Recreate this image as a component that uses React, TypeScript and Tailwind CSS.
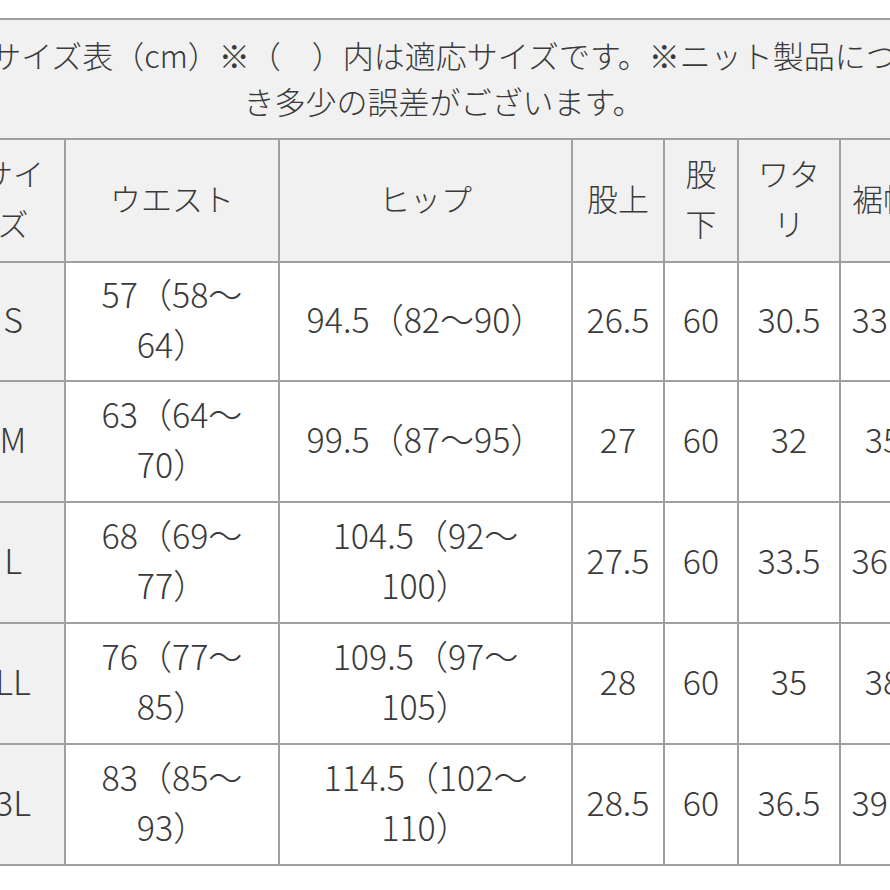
const headers: { label: string[] }[] = [
  { label: ["サイ", "ズ"] },
  { label: ["ウエスト"] },
  { label: ["ヒップ"] },
  { label: ["股上"] },
  { label: ["股", "下"] },
  { label: ["ワタ", "リ"] },
  { label: ["裾幅"] },
];

// each cell is a list of lines
const rows: string[][][] = [
  [["S"], ["57（58～", "64）"], ["94.5（82～90）"], ["26.5"], ["60"], ["30.5"], ["33.5"]],
  [["M"], ["63（64～", "70）"], ["99.5（87～95）"], ["27"], ["60"], ["32"], ["35"]],
  [["L"], ["68（69～", "77）"], ["104.5（92～", "100）"], ["27.5"], ["60"], ["33.5"], ["36.5"]],
  [["LL"], ["76（77～", "85）"], ["109.5（97～", "105）"], ["28"], ["60"], ["35"], ["38"]],
  [["3L"], ["83（85～", "93）"], ["114.5（102～", "110）"], ["28.5"], ["60"], ["36.5"], ["39.5"]],
];

const rowHeights = ["h-[119px]", "h-[121px]", "h-[121px]", "h-[121px]", "h-[121px]"];

const colWidths = ["w-[104px]", "w-[214px]", "w-[293px]", "w-[92px]", "w-[74px]", "w-[102px]", "w-[86px]"];

const Lines = ({ lines }: { lines: string[] }) => (
  <>
    {lines.map((l, i) => (
      <span key={i} className="block whitespace-nowrap">
        {l}
      </span>
    ))}
  </>
);

export default function App() {
  return (
    <div
      className="w-[890px] h-[890px] overflow-hidden bg-white font-light text-[#3a3a3a]"
      style={{ fontFamily: '"Noto Sans CJK JP", "Noto Sans", sans-serif' }}
    >
      <table className="mt-[18px] ml-[-40px] w-[965px] table-fixed border-collapse">
        <colgroup>
          {colWidths.map((w, i) => (
            <col key={i} className={w} />
          ))}
        </colgroup>
        <tbody>
          <tr className="h-[120px]">
            <td
              colSpan={7}
              className="border-2 border-[#a0a0a0] bg-[#f1f1f1] pb-[3px] text-center text-[31px] leading-[46px]"
            >
              <span className="block whitespace-nowrap">
                サイズ表（cm）※（　）内は適応サイズです。※ニット製品につ
              </span>
              <span className="block whitespace-nowrap">き多少の誤差がございます。</span>
            </td>
          </tr>
          <tr className="h-[123px]">
            {headers.map((h, i) => (
              <td
                key={i}
                className="border-2 border-[#a0a0a0] bg-[#f1f1f1] pb-[5px] text-center align-middle text-[31px] leading-[50px]"
              >
                <Lines lines={h.label} />
              </td>
            ))}
          </tr>
          {rows.map((r, ri) => (
            <tr key={ri} className={rowHeights[ri]}>
              {r.map((cell, ci) => (
                <td
                  key={ci}
                  className={
                    ci === 0
                      ? "border-2 border-[#a0a0a0] bg-[#f1f1f1] pb-[5px] text-center align-middle text-[34px] leading-[50px]"
                      : "border-2 border-[#a0a0a0] bg-white pb-[5px] text-center align-middle text-[34px] leading-[50px]"
                  }
                >
                  <Lines lines={cell} />
                </td>
              ))}
            </tr>
          ))}
        </tbody>
      </table>
    </div>
  );
}
